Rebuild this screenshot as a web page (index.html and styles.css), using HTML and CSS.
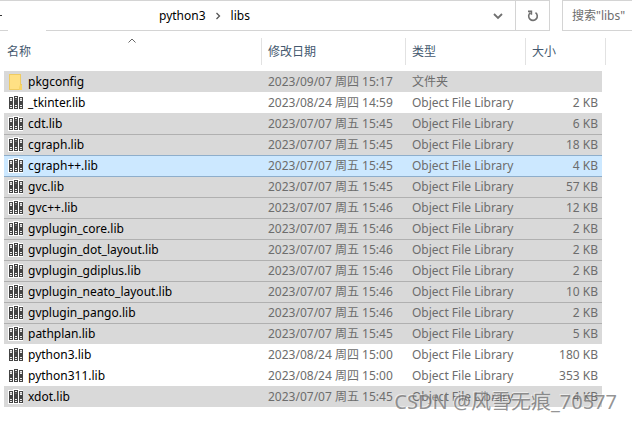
FILE: index.html
```html
<!DOCTYPE html>
<html lang="zh-CN">
<head>
<meta charset="utf-8">
<title>libs</title>
<link rel="stylesheet" href="styles.css">
</head>
<body>
<svg class="defs" aria-hidden="true">
  <symbol id="lib" viewBox="0 0 16 16">
    <path fill="#fff" d="M0 1h5V0h6v1h4v14H0z"/>
    <path fill="#444" d="M1 2h4v12H1zM6 1h4v13H6zM11 2h4v12h-4z"/>
    <path fill="#eee" d="M2 3h2v3H2zM7 2h2v1H7zM12 3h2v3h-2zM2 10h2v1H2zM7 10h2v1H7zM12 10h2v1h-2zM2 12h2v1H2zM7 12h2v1H7zM12 12h2v1h-2z"/>
    <path fill="#8a8a8a" d="M2 4h2v1H2zM7 4h2v1H7zM12 4h2v1h-2z" opacity=".6"/>
  </symbol>
  <symbol id="folder" viewBox="0 0 16 16">
    <path fill="#efcb62" d="M1 0h12v10h1v6H1z"/>
    <path fill="#ffe084" d="M2 1h10v10l-1 4H2z"/>
    <path fill="#f8d566" d="M12 11h2v5h-3z"/>
  </symbol>
</svg>

<header class="toolbar">
  <nav class="address" aria-label="路径">
    <span class="dash"></span>
    <a class="crumb" href="#">python3</a>
    <svg class="sep" viewBox="0 0 6 8"><path d="M1.5 1l3 3-3 3"/></svg>
    <a class="crumb" href="#">libs</a>
    <button class="drop" aria-label="以前的位置"><svg viewBox="0 0 10 8"><path d="M1 2l4 4 4-4"/></svg></button>
    <button class="refresh" aria-label="刷新"><svg viewBox="0 0 12 12"><path d="M8.5 2.6A4.3 4.3 0 1 1 3.2 2.8M1 1.4h3.4v3.4"/></svg></button>
  </nav>
  <input class="search" type="text" aria-label="搜索" placeholder="搜索&quot;libs&quot;">
</header>

<main>
<table class="files">
  <colgroup><col><col class="c-date"><col class="c-type"><col class="c-size"></colgroup>
  <thead>
    <tr>
      <th>名称<svg class="sort" viewBox="0 0 8 5"><path d="M.5 4.5L4 1l3.5 3.5"/></svg></th>
      <th>修改日期</th><th>类型</th><th>大小</th>
    </tr>
  </thead>
  <tbody>
    <tr class="marked"><td><svg class="icon"><use href="#folder"/></svg>pkgconfig</td><td>2023/09/07 周四 15:17</td><td>文件夹</td><td></td></tr>
    <tr><td><svg class="icon"><use href="#lib"/></svg>_tkinter.lib</td><td>2023/08/24 周四 14:59</td><td>Object File Library</td><td>2 KB</td></tr>
    <tr class="marked"><td><svg class="icon"><use href="#lib"/></svg>cdt.lib</td><td>2023/07/07 周五 15:45</td><td>Object File Library</td><td>6 KB</td></tr>
    <tr class="marked"><td><svg class="icon"><use href="#lib"/></svg>cgraph.lib</td><td>2023/07/07 周五 15:45</td><td>Object File Library</td><td>18 KB</td></tr>
    <tr class="marked current"><td><svg class="icon"><use href="#lib"/></svg>cgraph++.lib</td><td>2023/07/07 周五 15:45</td><td>Object File Library</td><td>4 KB</td></tr>
    <tr class="marked"><td><svg class="icon"><use href="#lib"/></svg>gvc.lib</td><td>2023/07/07 周五 15:45</td><td>Object File Library</td><td>57 KB</td></tr>
    <tr class="marked"><td><svg class="icon"><use href="#lib"/></svg>gvc++.lib</td><td>2023/07/07 周五 15:46</td><td>Object File Library</td><td>12 KB</td></tr>
    <tr class="marked"><td><svg class="icon"><use href="#lib"/></svg>gvplugin_core.lib</td><td>2023/07/07 周五 15:46</td><td>Object File Library</td><td>2 KB</td></tr>
    <tr class="marked"><td><svg class="icon"><use href="#lib"/></svg>gvplugin_dot_layout.lib</td><td>2023/07/07 周五 15:46</td><td>Object File Library</td><td>2 KB</td></tr>
    <tr class="marked"><td><svg class="icon"><use href="#lib"/></svg>gvplugin_gdiplus.lib</td><td>2023/07/07 周五 15:46</td><td>Object File Library</td><td>2 KB</td></tr>
    <tr class="marked"><td><svg class="icon"><use href="#lib"/></svg>gvplugin_neato_layout.lib</td><td>2023/07/07 周五 15:46</td><td>Object File Library</td><td>10 KB</td></tr>
    <tr class="marked"><td><svg class="icon"><use href="#lib"/></svg>gvplugin_pango.lib</td><td>2023/07/07 周五 15:46</td><td>Object File Library</td><td>2 KB</td></tr>
    <tr class="marked"><td><svg class="icon"><use href="#lib"/></svg>pathplan.lib</td><td>2023/07/07 周五 15:45</td><td>Object File Library</td><td>5 KB</td></tr>
    <tr><td><svg class="icon"><use href="#lib"/></svg>python3.lib</td><td>2023/08/24 周四 15:00</td><td>Object File Library</td><td>180 KB</td></tr>
    <tr><td><svg class="icon"><use href="#lib"/></svg>python311.lib</td><td>2023/08/24 周四 15:00</td><td>Object File Library</td><td>353 KB</td></tr>
    <tr class="marked"><td><svg class="icon"><use href="#lib"/></svg>xdot.lib</td><td>2023/07/07 周五 15:45</td><td>Object File Library</td><td>4 KB</td></tr>
  </tbody>
</table>
<div class="watermark">CSDN @风雪无痕_70577</div>
</main>
</body>
</html>
```

FILE: styles.css
```css
* { box-sizing: border-box; }

body {
  margin: 0;
  background: #fff;
  color: #111;
  font: 12px/20px "Noto Sans", "Noto Sans CJK SC", sans-serif;
}

.defs { position: absolute; width: 0; height: 0; }

.toolbar {
  position: relative;
  display: flex;
  gap: 12px;
  height: 31px;
}

/* break in the lower edge under the hidden part of the path */
.toolbar::after {
  content: "";
  position: absolute;
  bottom: 0;
  left: 8px;
  width: 38px;
  height: 1px;
  background: #fff;
}

.address {
  flex: 1;
  display: flex;
  align-items: center;
  border: 1px solid #d4d4d4;
  border-left: 0;
}

.dash { width: 2px; height: 1px; margin-right: 157px; background: #333; }

.crumb { color: #000; text-decoration: none; }

.sep {
  width: 6px;
  height: 8px;
  margin: 0 10px 0 9px;
  fill: none;
  stroke: #555;
  stroke-width: 1.3;
}

button {
  display: flex;
  align-items: center;
  justify-content: center;
  height: 100%;
  padding: 0;
  border: 0;
  background: none;
}

button svg { fill: none; stroke: #707070; stroke-width: 1.8; }

.drop { width: 34px; margin-left: auto; }
.drop svg { width: 10px; height: 8px; }
.refresh { width: 34px; border-left: 1px solid #d4d4d4; }
.refresh svg { width: 12px; height: 12px; stroke-width: 1.6; }

.search {
  width: 70px;
  padding: 0 0 0 9px;
  border: 1px solid #d4d4d4;
  border-right: 0;
  border-radius: 0;
  background: #fff;
  font: inherit;
}
.search::placeholder { color: #6d6d6d; opacity: 1; }

main { position: relative; padding: 0 30px 14px 4px; }

.files {
  width: 100%;
  table-layout: fixed;
  border-collapse: separate;
  border-spacing: 0;
}

.c-date { width: 144px; }
.c-type { width: 120px; }
.c-size { width: 76px; }

th {
  position: relative;
  height: 40px;
  padding: 2px 0 0 6px;
  color: #44586e;
  font-weight: 400;
  text-align: left;
}
th:first-child { padding-left: 3px; }

th::after {
  content: "";
  position: absolute;
  top: 7px;
  right: 0;
  width: 1px;
  height: 27px;
  background: #e2e2e2;
}
th:last-child::after { right: -4px; }

.sort {
  position: absolute;
  top: 7px;
  left: 50%;
  width: 8px;
  height: 5px;
  margin-left: -5px;
  fill: none;
  stroke: #666;
}

td {
  height: 21px;
  padding: 0 4px 0 6px;
  border-top: 1px solid transparent;
  color: #6d6d6d;
  white-space: nowrap;
}
td:first-child { padding-left: 4px; color: #000; }
td:last-child { text-align: right; }

.icon {
  width: 16px;
  height: 16px;
  margin: 0 4px 2px 0;
  vertical-align: middle;
}

.marked td { background: #d9d9d9; border-top-color: #d9d9d9; }
.marked + .marked td { border-top-color: #b0b0b0; }
.marked.current td { background: #cce8ff; border-top-color: #8eaecb; }
.current + .marked td { border-top-color: #8eaecb; }

.watermark {
  position: absolute;
  right: 15px;
  bottom: 5px;
  color: #666666b3;
  font-size: 20px;
  line-height: 28px;
  text-shadow: -1px -1px 0 #ffffff80;
}
```
